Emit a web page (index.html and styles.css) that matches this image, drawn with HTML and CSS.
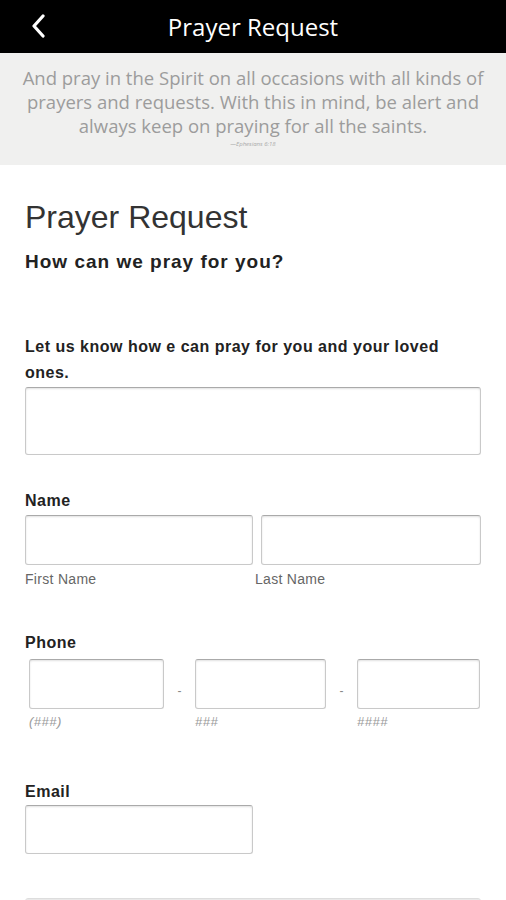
FILE: index.html
```html
<!DOCTYPE html>
<html lang="en">
<head>
  <meta charset="UTF-8" />
  <title>Prayer Request</title>
  <link rel="stylesheet" href="styles.css">
</head>
<body>

  <!-- TOP BAR -->
  <div class="topbar">
    <span class="back">
      <svg width="16" height="24" viewBox="0 0 16 24"><path d="M13 2 L4 12 L13 22" fill="none" stroke="#fff" stroke-width="3.2" stroke-linecap="round" stroke-linejoin="round"/></svg>
    </span>
    <h1>Prayer Request</h1>
  </div>

  <!-- VERSE -->
  <div class="verse">
    <p>And pray in the Spirit on all occasions with all kinds of prayers and requests. With this in mind, be alert and always keep on praying for all the saints.</p>
    <div class="cite">&mdash;Ephesians 6:18</div>
  </div>

  <!-- FORM -->
  <div class="form">
    <h2>Prayer Request</h2>
    <h3>How can we pray for you?</h3>

    <div class="field first">
      <label>Let us know how e can pray for you and your loved ones.</label>
      <div class="box big"></div>
    </div>

    <div class="field name">
      <label>Name</label>
      <div class="name-row">
        <div class="col">
          <div class="box"></div>
          <span class="sub">First Name</span>
        </div>
        <div class="col">
          <div class="box"></div>
          <span class="sub shift">Last Name</span>
        </div>
      </div>
    </div>

    <div class="field phone">
      <label>Phone</label>
      <div class="phone-row">
        <div class="col p1">
          <div class="box"></div>
          <span class="hint">(###)</span>
        </div>
        <span class="dash">-</span>
        <div class="col p2">
          <div class="box"></div>
          <span class="hint">###</span>
        </div>
        <span class="dash">-</span>
        <div class="col p3">
          <div class="box"></div>
          <span class="hint">####</span>
        </div>
      </div>
    </div>

    <div class="field email">
      <label>Email</label>
      <div class="box mail"></div>
    </div>

    <div class="box last"></div>
  </div>

</body>
</html>
```

FILE: styles.css
```css
* {
  box-sizing: border-box;
}
body {
  margin: 0;
  padding: 0;
  background: #fff;
  font-family: 'Liberation Sans', Arial, sans-serif;
  color: #222;
  overflow: hidden;
}

.topbar {
  height: 53px;
  background: #000;
  display: flex;
  align-items: center;
  justify-content: center;
  position: relative;
}

.topbar h1 {
  margin: 0;
  font-family: 'Open Sans', sans-serif;
  font-weight: 400;
  font-size: 24px;
  color: #fff;
}

.back {
  position: absolute;
  left: 30px;
  top: 14px;
}

.verse {
  background: #f0f0ef;
  padding: 13px 8px 12px;
  text-align: center;
  height: 112px;
}

.verse p {
  margin: 0;
  font-family: 'Open Sans', sans-serif;
  font-size: 18.5px;
  line-height: 24px;
  color: #9c9c9c;
}

.cite {
  font-family: 'Open Sans', sans-serif;
  font-style: italic;
  font-size: 6px;
  color: #aaa;
  margin-top: 2px;
}

.form {
  padding: 35px 25px 0;
}

.form h2 {
  margin: 0;
  font-weight: 400;
  font-size: 32px;
  line-height: 34px;
  color: #333;
}

.form h3 {
  margin: 17px 0 0;
  font-size: 19px;
  font-weight: 700;
  letter-spacing: 1px;
  color: #222;
}

.field {
  margin-top: 33px;
}

.field.first {
  margin-top: 61px;
}

.field.phone {
  margin-top: 43px;
}

.field.email {
  margin-top: 50px;
}

.field label {
  display: block;
  font-size: 16px;
  font-weight: 700;
  letter-spacing: 0.5px;
  line-height: 26px;
  color: #222;
  margin-bottom: 1px;
}

.field.phone label {
  margin-bottom: 3px;
}

.field.email label {
  margin-bottom: 0;
}

.box {
  height: 50px;
  border: 1px solid #c9c9c9;
  border-top-color: #aaa;
  border-radius: 3px;
  box-shadow: inset 0 1px 2px rgba(0,0,0,0.12);
  background: #fff;
}

.box.big {
  height: 68px;
  margin-top: 0;
}

.name-row {
  display: flex;
  gap: 8px;
}

.name-row .col {
  flex: 1;
}

.name-row .col:first-child {
  flex: 0 0 228px;
}

.sub {
  display: block;
  font-size: 14px;
  letter-spacing: 0.3px;
  color: #666;
  margin-top: 6px;
}

.sub.shift {
  margin-left: -6px;
}

.phone-row {
  display: flex;
  align-items: flex-start;
  padding-left: 4px;
}

.phone-row .p1 { width: 135px; }
.phone-row .p2 { width: 131px; }
.phone-row .p3 { width: 123px; }

.dash {
  width: 31px;
  text-align: center;
  font-size: 12px;
  color: #888;
  padding-top: 25px;
}

.hint {
  display: block;
  font-size: 13px;
  font-style: italic;
  letter-spacing: 0.5px;
  color: #999;
  margin-top: 5px;
}

.box.mail {
  width: 228px;
  height: 49px;
}

.box.last {
  margin-top: 44px;
  height: 40px;
  border-color: #ddd;
}
```
